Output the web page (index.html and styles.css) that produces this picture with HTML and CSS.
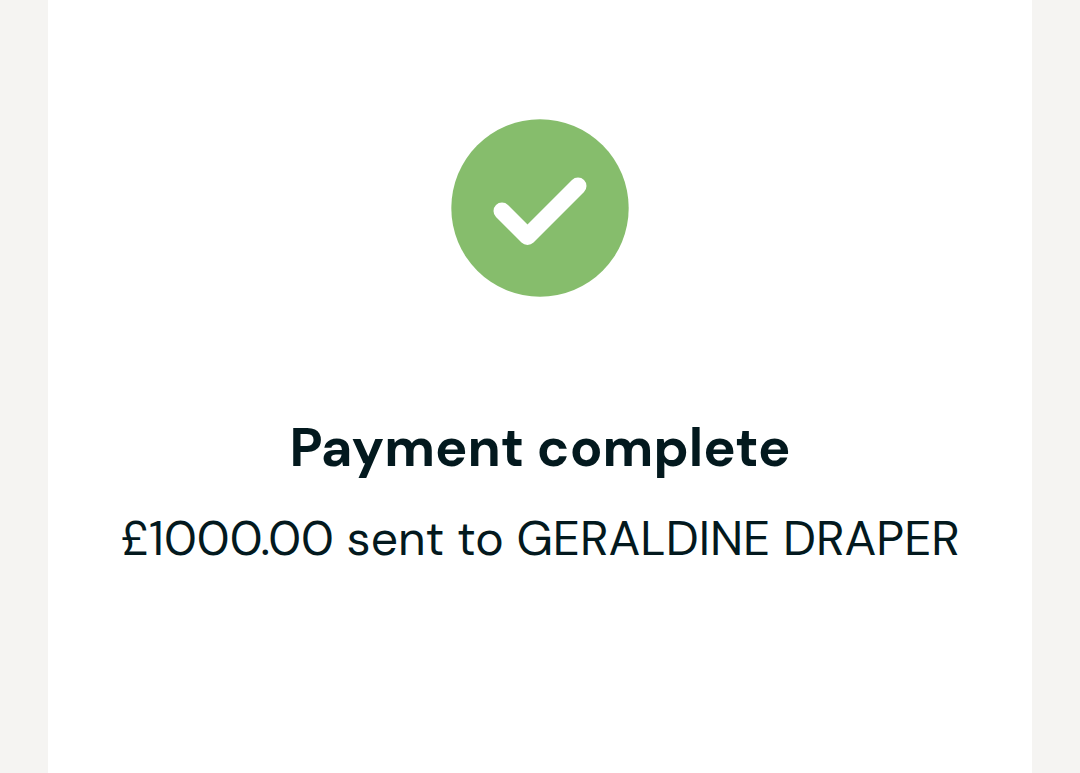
FILE: index.html
```html
<!DOCTYPE html>
<html lang="en">
<head>
<meta charset="utf-8">
<meta name="viewport" content="width=device-width, initial-scale=1">
<title>Payment complete</title>
<link rel="stylesheet" href="styles.css">
</head>
<body>
<main class="card">
  <svg class="status-icon" viewBox="0 0 178 178" aria-hidden="true">
    <circle class="status-disc" cx="89" cy="89" r="88.700"/>
    <path class="status-check" d="M51 92 L76.500 117.500 L127 67"/>
  </svg>
  <h1 class="title">Payment complete</h1>
  <p class="detail">£1000.00 sent to GERALDINE DRAPER</p>
</main>
</body>
</html>
```

FILE: styles.css
```css
* {
  box-sizing: border-box;
}

body {
  margin: 0;
  min-height: 100vh;
  padding: 0 48px;
  display: flex;
  background: #f5f4f2;
  color: #03191e;
  font-family: "DM Sans", Lato, sans-serif;
}

.card {
  flex: 1;
  display: flex;
  flex-direction: column;
  align-items: center;
  padding: 119px 24px 48px;
  background: #fff;
  text-align: center;
}

.status-icon {
  width: 178px;
  height: 178px;
}

.status-disc {
  fill: #86bd6c;
}

.status-check {
  fill: none;
  stroke: #fff;
  stroke-width: 17;
  stroke-linecap: round;
  stroke-linejoin: round;
}

.title {
  margin: 115px 0 0;
  font-size: 54px;
  line-height: 72px;
  font-weight: 700;
}

.detail {
  margin: 23px 0 0;
  font-size: 48px;
  line-height: 64px;
  font-weight: 400;
}
```
